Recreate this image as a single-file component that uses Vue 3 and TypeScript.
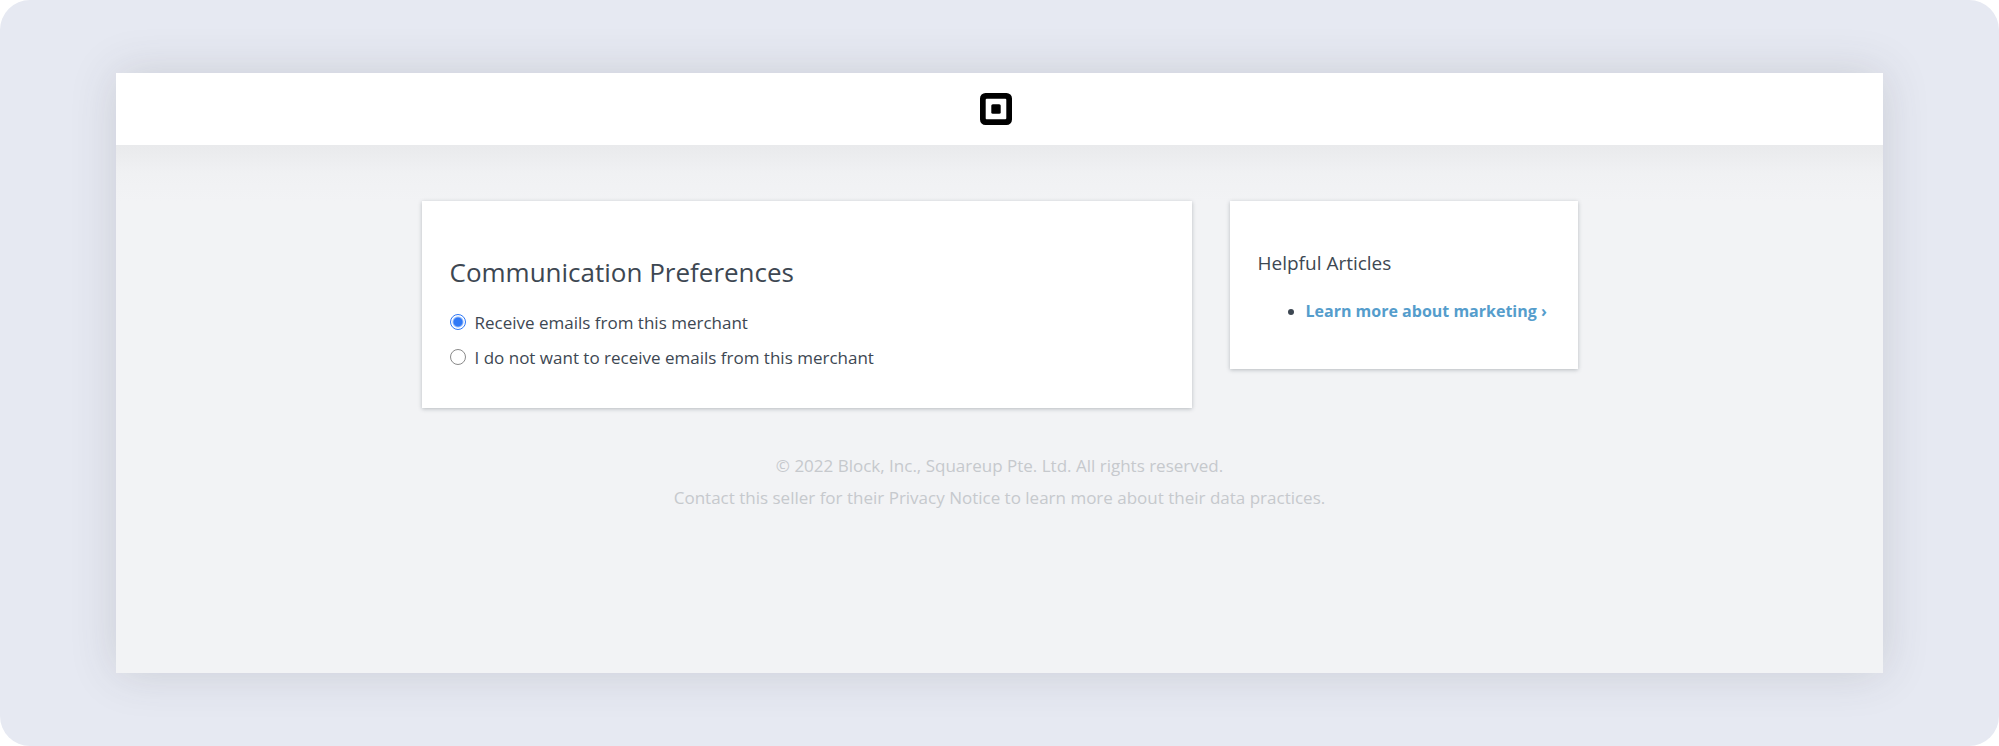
<script setup lang="ts">
import { ref } from 'vue'

type Preference = 'subscribed' | 'unsubscribed'

const preference = ref<Preference>('subscribed')

const options: { value: Preference; label: string }[] = [
  { value: 'subscribed', label: 'Receive emails from this merchant' },
  { value: 'unsubscribed', label: 'I do not want to receive emails from this merchant' },
]

const articles = [{ title: 'Learn more about marketing', href: '#marketing' }]
</script>

<template>
  <div class="stage">
    <div class="window">
      <header class="header">
        <svg class="logo" viewBox="0 0 32 32" role="img" aria-label="Square">
          <path
            fill-rule="evenodd"
            d="M5.5 0h21A5.5 5.5 0 0 1 32 5.5v21a5.5 5.5 0 0 1-5.5 5.5h-21A5.5 5.5 0 0 1 0 26.5v-21A5.5 5.5 0 0 1 5.5 0ZM6.8 5.7a1.1 1.1 0 0 0-1.1 1.1v18.4c0 .6.5 1.1 1.1 1.1h18.4a1.1 1.1 0 0 0 1.1-1.1V6.8a1.1 1.1 0 0 0-1.1-1.1Z"
          />
          <rect x="11.3" y="11.3" width="9.4" height="9.4" rx="1.5" />
        </svg>
      </header>

      <div class="body">
        <div class="columns">
          <main class="card preferences">
            <h1 class="title">Communication Preferences</h1>
            <form class="options">
              <label v-for="option in options" :key="option.value" class="option">
                <input v-model="preference" class="radio" type="radio" name="preference" :value="option.value" />
                <span>{{ option.label }}</span>
              </label>
            </form>
          </main>

          <aside class="card articles">
            <h2 class="subtitle">Helpful Articles</h2>
            <ul class="list">
              <li v-for="article in articles" :key="article.href">
                <a class="link" :href="article.href">{{ article.title }} ›</a>
              </li>
            </ul>
          </aside>
        </div>

        <footer class="footer">
          <p>© 2022 Block, Inc., Squareup Pte. Ltd. All rights reserved.</p>
          <p>Contact this seller for their Privacy Notice to learn more about their data practices.</p>
        </footer>
      </div>
    </div>
  </div>
</template>

<style>
body {
  background: #fff;
}
</style>

<style scoped>
.stage {
  box-sizing: border-box;
  display: flex;
  min-height: 100vh;
  padding: 73px 116px;
  border-radius: 30px;
  background: #e6e9f2;
  color: #3d4752;
  font-family: "Open Sans", "Liberation Sans", sans-serif;
  font-size: 17px;
  line-height: 32px;
}

.window {
  display: flex;
  flex: 1;
  flex-direction: column;
  min-width: 0;
  background: #f2f3f5;
  box-shadow: 0 0 44px rgba(60, 60, 70, 0.16);
}

.header {
  display: flex;
  align-items: center;
  justify-content: center;
  height: 72px;
  padding-right: 8px;
  background: #fff;
}

.logo {
  width: 32px;
  height: 32px;
  fill: #000;
}

.body {
  flex: 1;
  padding: 56px 24px;
  background: linear-gradient(#e9eaec, #f0f1f3 28px, #f2f3f5 56px) no-repeat top / 100% 56px;
}

.columns {
  display: flex;
  flex-wrap: wrap;
  align-items: flex-start;
  gap: 38px;
  max-width: 1156px;
  margin: 0 auto;
}

.card {
  box-sizing: border-box;
  background: #fff;
  box-shadow: 0 1px 4px rgba(50, 60, 70, 0.3);
}

.preferences {
  flex: 770 1 400px;
  padding: 53px 28px 33px;
}

.articles {
  flex: 0 1 348px;
  padding: 46px 28px 42px;
}

.title {
  margin: 0 0 15px;
  font-size: 26px;
  font-weight: 400;
  line-height: 36px;
}

.options {
  display: grid;
}

.option {
  display: flex;
  align-items: center;
  gap: 9px;
  line-height: 35px;
}

.radio {
  flex: none;
  width: 16px;
  height: 16px;
  margin: 0 0 2px;
  border: 1px solid #8a8a8a;
  border-radius: 50%;
  background: #fff;
  appearance: none;
}

.radio:checked {
  border-color: #2f78f6;
  background: radial-gradient(circle, #2f78f6 4px, #fff 6px);
}

.subtitle {
  margin: 0 0 15px;
  font-size: 19px;
  font-weight: 400;
  line-height: 33px;
}

.list {
  margin: 0;
  padding-left: 48px;
  font-size: 16px;
}

.link {
  color: #559dcc;
  font-weight: 700;
  text-decoration: none;
}

.footer {
  margin-top: 42px;
  color: #c6c9cd;
  text-align: center;
}

.footer p {
  margin: 0;
}
</style>
